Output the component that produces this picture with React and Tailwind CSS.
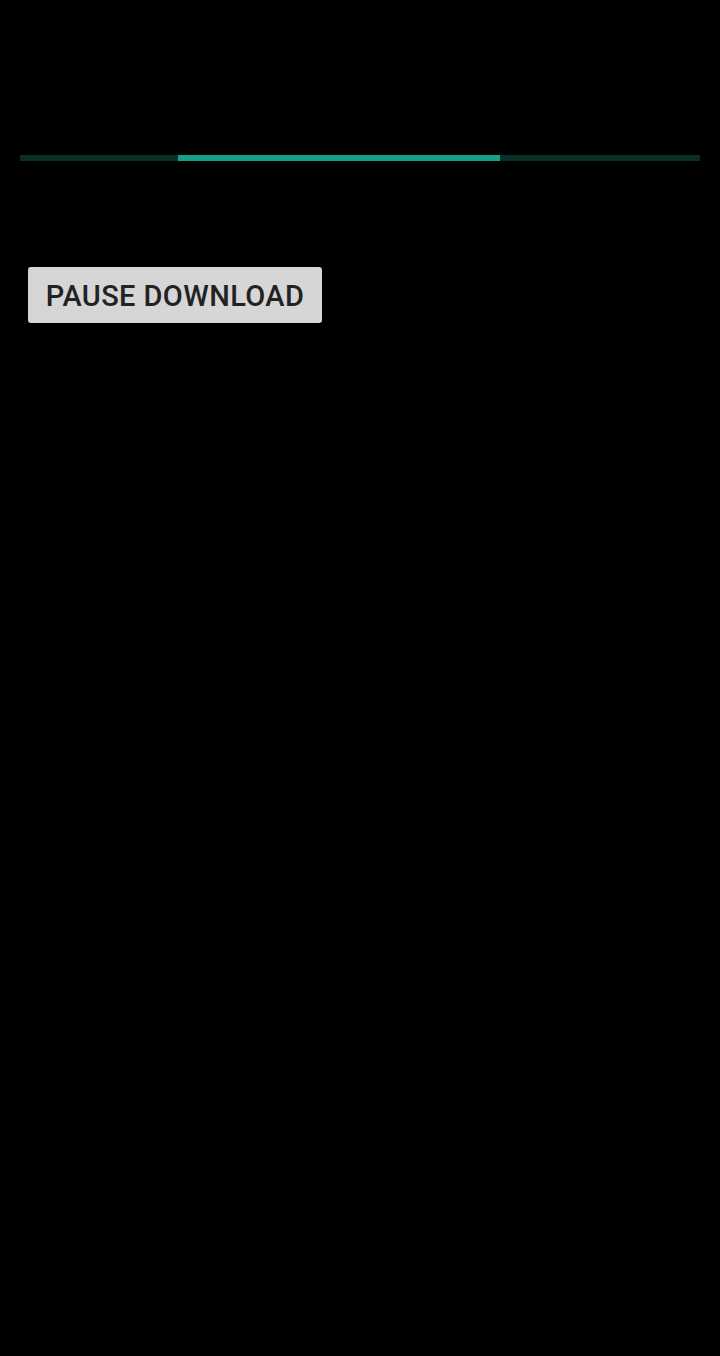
import React from 'react';

const App = () => {
  return (
    <div className="w-[720px] h-[1356px] bg-black font-['Roboto',sans-serif]">
      <div className="px-5 pt-[155px]">
        <div className="h-[6px] bg-[#0a2f29] flex">
          <div className="w-[158px]" />
          <div className="w-[322px] bg-[#13a08c]" />
        </div>
      </div>
      <div className="px-7 pt-[106px]">
        <button className="h-[56px] w-[294px] bg-[#d6d6d6] rounded-[3px] text-[29px] font-medium text-[#222] tracking-[0.4px] pt-[3px] flex items-center justify-center">
          PAUSE DOWNLOAD
        </button>
      </div>
    </div>
  );
};

export default App;
